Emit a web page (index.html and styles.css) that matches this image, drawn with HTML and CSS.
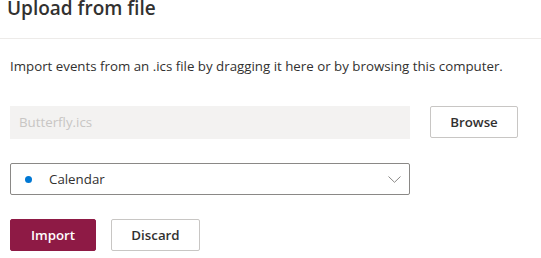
FILE: index.html
```html
<!DOCTYPE html>
<html lang="en">
<head>
<meta charset="utf-8">
<title>Upload from file</title>
<link rel="stylesheet" href="styles.css">
</head>
<body>
<div class="panel">
  <header class="header">
    <h1 class="title">Upload from file</h1>
  </header>
  <div class="content">
    <p class="desc">Import events from an .ics file by dragging it here or by browsing this computer.</p>
    <div class="file-row">
      <div class="file-input">Butterfly.ics</div>
      <button class="btn btn-default">Browse</button>
    </div>
    <div class="dropdown">
      <span class="dot"></span>
      <span class="dd-label">Calendar</span>
      <svg class="chevron" width="13" height="7" viewBox="0 0 13 7"><path d="M0.5 0.5 L6.5 6.3 L12.5 0.5" fill="none" stroke="#8a8886" stroke-width="1"/></svg>
    </div>
    <div class="actions">
      <button class="btn btn-primary">Import</button>
      <button class="btn btn-default btn-discard">Discard</button>
    </div>
  </div>
</div>
</body>
</html>
```
FILE: styles.css
```css
* { box-sizing: border-box; }
html, body { margin: 0; padding: 0; background: #fff; }
body {
  font-family: "Open Sans", "Noto Sans", "Liberation Sans", sans-serif;
  color: #323130;
  width: 541px;
  height: 258px;
  overflow: hidden;
}
.header {
  padding: 0 7px 22px;
  border-bottom: 1px solid #edebe9;
}
.title {
  margin: 0;
  font-size: 19px;
  line-height: 16px;
  font-weight: 600;
  color: #323130;
}
.content {
  padding: 0 10px;
}
.desc {
  margin: 17px 0 0;
  font-size: 13.3px;
  line-height: 20px;
  color: #323130;
}
.file-row {
  display: flex;
  align-items: flex-start;
  gap: 20px;
  margin-top: 30px;
}
.file-input {
  width: 400px;
  height: 33px;
  background: #f3f2f1;
  color: #c8c6c4;
  font-size: 13.3px;
  line-height: 33px;
  padding-left: 9px;
}
.btn {
  height: 32px;
  font-family: inherit;
  font-size: 13.3px;
  font-weight: 600;
  border-radius: 2px;
  padding: 0;
  cursor: pointer;
}
.btn-default {
  width: 88px;
  background: #fff;
  border: 1px solid #c8c6c4;
  color: #323130;
}
.dropdown {
  display: flex;
  align-items: center;
  width: 400px;
  height: 32px;
  margin-top: 24px;
  border: 1px solid #8a8886;
  border-radius: 2px;
  padding: 0 8px 0 14px;
}
.dot {
  width: 7px;
  height: 7px;
  border-radius: 50%;
  background: #0078d4;
}
.dd-label {
  margin-left: 17px;
  font-size: 13.3px;
  flex: 1;
}
.chevron {
  display: block;
}
.actions {
  display: flex;
  gap: 15px;
  margin-top: 24px;
}
.btn-primary {
  width: 86px;
  background: #8e1a45;
  border: 1px solid #8e1a45;
  color: #fff;
}
.btn-discard {
  width: 89px;
}
```
